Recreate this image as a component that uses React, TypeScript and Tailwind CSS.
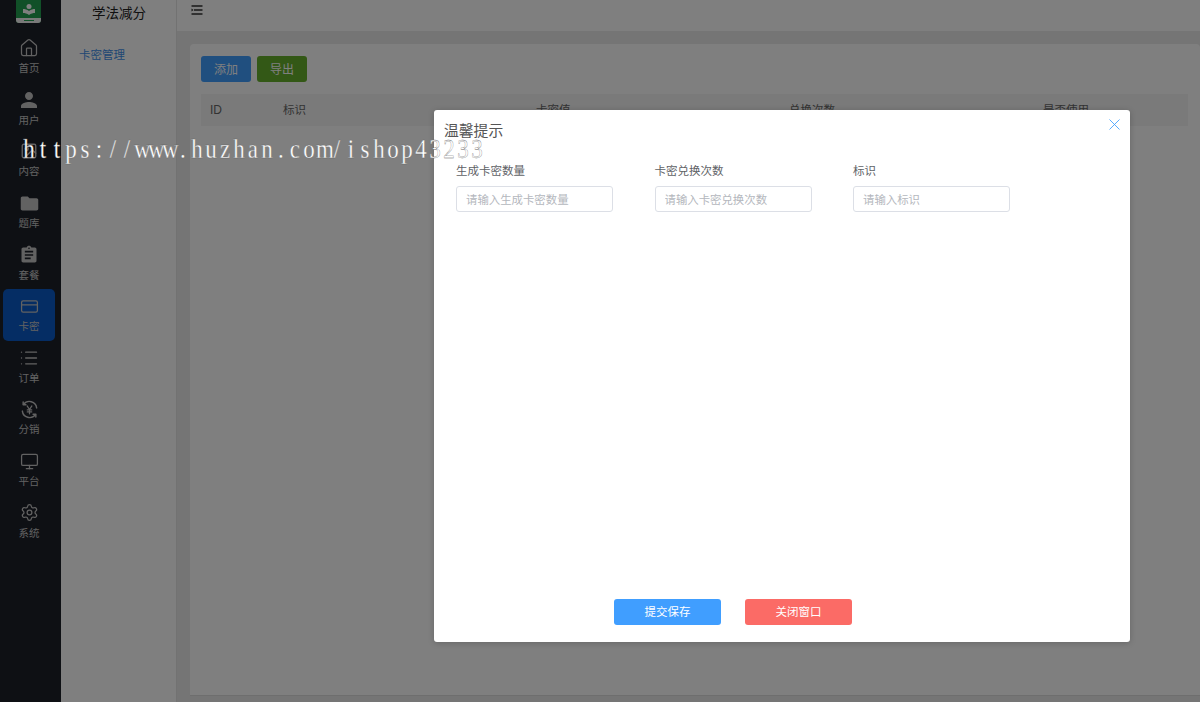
import React from "react";
import { House, CreditCard, List, Monitor, Settings, X, Image as ImageIcon } from "lucide-react";
import { MdPerson, MdFolder, MdAssignment } from "react-icons/md";

const Yen = () => (
  <svg width="19" height="19" viewBox="0 0 24 24" fill="none" stroke="currentColor" strokeWidth="1.8" strokeLinecap="round" strokeLinejoin="round">
    <path d="M3 14a9.2 9.2 0 0 0 16.5 4.500" />
    <path d="M21 10A9.2 9.2 0 0 0 4.500 5.500" />
    <path d="M4 2.500v3.500h3.500" />
    <path d="M20 21.500V18h-3.500" />
    <path d="M9 7.500l3 4.500 3-4.500M12 12v5.500M9.200 12.500h5.600M9.200 15h5.600" strokeWidth="1.6" />
  </svg>
);

const nav: { label: string; icon: React.ReactNode; active?: boolean }[] = [
  { label: "首页", icon: <House size={20} strokeWidth={1.5} /> },
  { label: "用户", icon: <MdPerson size={24} /> },
  { label: "内容", icon: <ImageIcon size={18} strokeWidth={1.8} /> },
  { label: "题库", icon: <MdFolder size={21} /> },
  { label: "套餐", icon: <MdAssignment size={20} /> },
  { label: "卡密", icon: <CreditCard size={19} strokeWidth={1.6} />, active: true },
  { label: "订单", icon: <List size={20} strokeWidth={1.6} /> },
  { label: "分销", icon: <Yen /> },
  { label: "平台", icon: <Monitor size={19} strokeWidth={1.6} /> },
  { label: "系统", icon: <Settings size={19} strokeWidth={1.6} /> },
];

const fields = [
  { label: "生成卡密数量", ph: "请输入生成卡密数量" },
  { label: "卡密兑换次数", ph: "请输入卡密兑换次数" },
  { label: "标识", ph: "请输入标识" },
];

const mark = "https://www.huzhan.com/ishop43233".split("");

export default function App() {
  return (
    <div className="relative flex h-[702px] w-[1200px] overflow-hidden bg-[#ebebeb] font-['Noto_Sans_CJK_SC','Noto_Sans',sans-serif] text-[#333]">
      <aside className="flex w-[61px] shrink-0 flex-col bg-[#1d2029] text-[#c4c4c4]">
        <div className="ml-[16px] flex h-[23px] w-[25px] flex-col items-center justify-end overflow-hidden rounded-b-[3px] bg-[#22a050]">
          <svg width="14" height="12" viewBox="0 0 14 12" className="mb-[2px]">
            <circle cx="7" cy="2.500" r="2.500" fill="#fff" />
            <path d="M1 5c2 0 4 .6 6 2 2-1.400 4-2 6-2v4c-2 0-4 .6-6 2-2-1.400-4-2-6-2z" fill="#fff" />
          </svg>
          <div className="flex h-[5px] w-full items-center justify-center bg-[#f3f3f3]">
            <div className="h-[1px] w-[10px] bg-[#22a050]" />
          </div>
        </div>
        <nav className="mt-[8px] flex flex-col">
          {nav.map((n) => (
            <div
              key={n.label}
              className={`ml-[3px] flex h-[51.6px] w-[52px] flex-col items-center justify-center rounded-[5px] ${n.active ? "bg-[#0a5ac8]" : ""}`}
            >
              <div className="flex h-[22px] items-center justify-center">{n.icon}</div>
              <span className="text-[10.5px] leading-[17px]">{n.label}</span>
            </div>
          ))}
        </nav>
      </aside>

      <section className="flex w-[116px] shrink-0 flex-col border-r border-[#e4e4e4] bg-white">
        <div className="flex h-[24px] items-center justify-center pl-[1px] text-[13.5px] text-[#222]">学法减分</div>
        <div className="mt-[22px] pl-[18px] text-[11.5px] leading-[16px] text-[#3f8fe8]">卡密管理</div>
      </section>

      <main className="flex min-w-0 flex-1 flex-col">
        <header className="flex h-[31px] shrink-0 items-start bg-white pl-[14px] pt-[4px]">
          <svg width="12" height="12" viewBox="0 0 12 12" stroke="#333" strokeWidth="1.600">
            <path d="M0.500 2h11M3 6h8.500M0.500 10h11" />
            <path d="M0.500 4.500v3l2-1.500z" fill="#333" stroke="none" />
          </svg>
        </header>
        <div className="flex-1 pl-[13px] pt-[13px]">
          <div className="h-[652px] rounded-t-[4px] border-b border-[#dcdcdc] bg-white p-[12px] pl-[11px]">
            <div className="flex gap-[6px]">
              <button className="h-[26px] w-[50px] rounded-[3px] bg-[#409eff] text-[12px] text-white">添加</button>
              <button className="h-[26px] w-[50px] rounded-[3px] bg-[#67b02d] text-[12px] text-white">导出</button>
            </div>
            <div className="mt-[12px] flex h-[32px] items-center bg-[#f4f4f4] text-[11.5px] text-[#666]">
              <span className="w-[82px] pl-[9px] font-['Liberation_Sans',sans-serif] text-[12px]">ID</span>
              <span className="w-[253px]">标识</span>
              <span className="w-[253px]">卡密值</span>
              <span className="w-[254px]">总换次数</span>
              <span>是否使用</span>
            </div>
          </div>
        </div>
      </main>

      <div className="absolute inset-0 bg-black/50" />

      <div className="absolute left-[434px] top-[110px] flex h-[532px] w-[696px] flex-col rounded-[3px] bg-white shadow-[0_1px_6px_rgba(0,0,0,0.2)]">
        <div className="flex items-start justify-between pl-[10px] pr-[6px] pt-[9px]">
          <h2 className="text-[14.800px] font-normal leading-[22px] text-[#555]">温馨提示</h2>
          <X size={19} strokeWidth={1.1} className="mt-[-4px] text-[#409eff]" />
        </div>
        <div className="ml-[22px] mt-[21px] flex gap-[41.500px]">
          {fields.map((f) => (
            <div key={f.label} className="flex w-[157px] flex-col">
              <label className="text-[11.500px] leading-[17px] text-[#606266]">{f.label}</label>
              <input
                readOnly
                placeholder={f.ph}
                className="mt-[7px] h-[26px] w-full rounded-[3px] border border-[#dcdfe6] bg-white px-[9px] text-[11.400px] outline-none placeholder:text-[#b4b7bd]"
              />
            </div>
          ))}
        </div>
        <div className="mb-[17px] ml-[180px] mt-auto flex gap-[24px]">
          <button className="h-[26px] w-[107px] rounded-[3px] bg-[#409eff] text-[11.500px] text-white">提交保存</button>
          <button className="h-[26px] w-[107px] rounded-[3px] bg-[#fb6b66] text-[11.500px] text-white">关闭窗口</button>
        </div>
      </div>

      <div className="absolute left-[22px] top-[134px] flex origin-left scale-x-[0.85] font-['Liberation_Serif',serif] text-[27px] leading-[30px] text-white [-webkit-text-stroke:0.3px_#666]">
        {mark.map((c, i) => (
          <span key={i} className="w-[16.47px] shrink-0 text-center">{c}</span>
        ))}
      </div>
    </div>
  );
}
